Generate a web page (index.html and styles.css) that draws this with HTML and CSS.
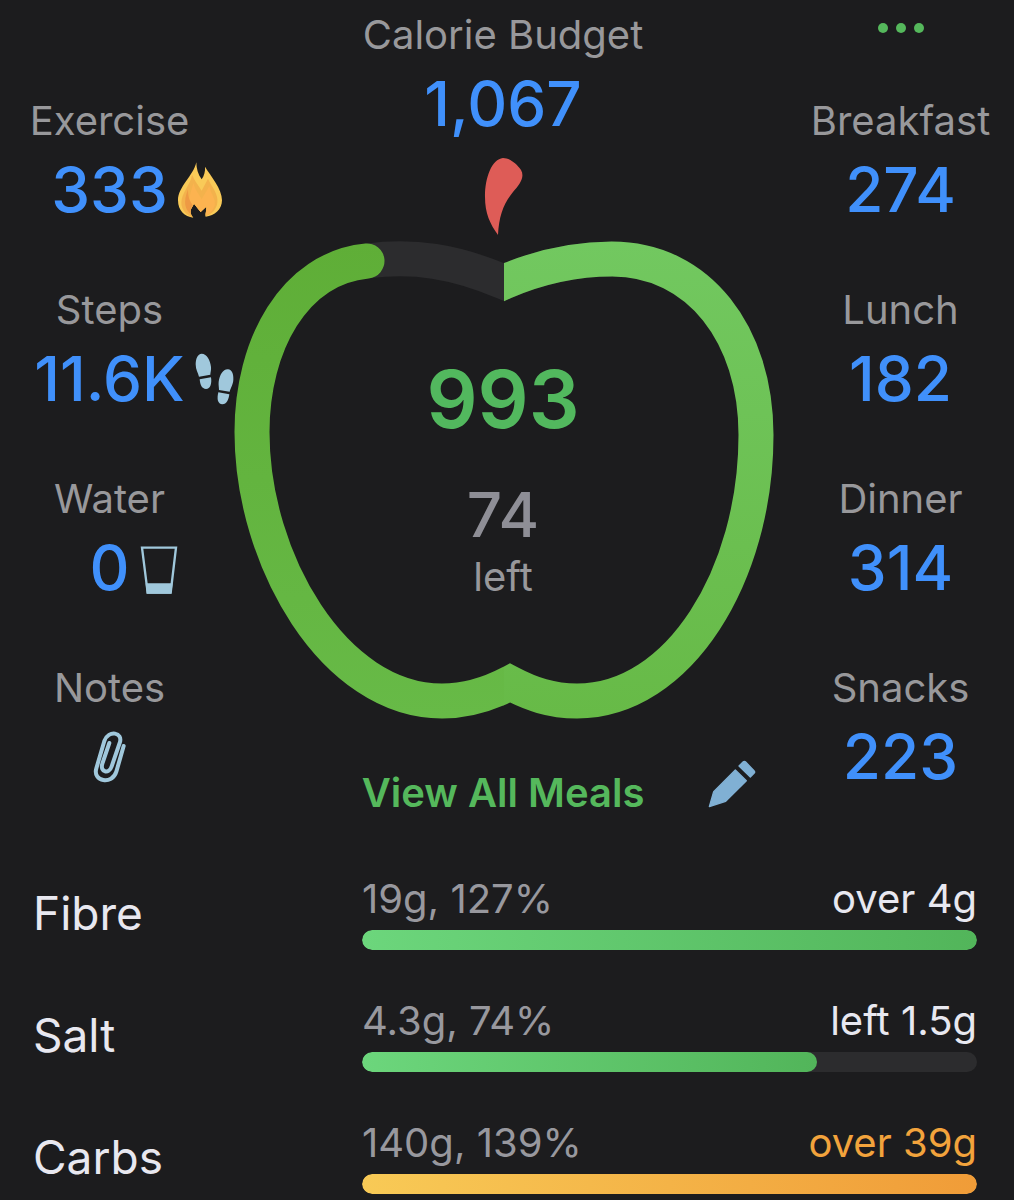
FILE: index.html
```
<!DOCTYPE html>
<html lang="en">
<head>
    <meta charset="UTF-8">
    <meta name="viewport" content="width=device-width, initial-scale=1.0">
    <title>Calorie Budget</title>
    <link rel="stylesheet" href="styles.css">
</head>
<body>
    <main class="dashboard">
        <!-- Activity column -->
        <section class="side activity">
            <div class="stat">
                <h2 class="label">Exercise</h2>
                <div class="value-row">
                    <span class="value">333</span>
                    <svg class="icon" width="44" height="56" viewBox="470 220 132 168" aria-hidden="true">
                        <path fill="#f9ca58" d="M525 221C525 238 530 258 541 272C549 260 552 248 551 234C568 262 602 300 602 335C602 362 580 382 553 384C550 375 556 368 555 354C548 358 542 364 538 370C532 364 526 354 518 345C514 352 508 358 508 366C507 374 511 382 516 387C490 385 470 366 470 335C470 294 516 262 525 221Z"/>
                        <path fill="#f3b24c" d="M512 258C520 278 532 290 541 306L560 270C572 296 592 316 588 342C585 362 572 376 554 382C551 374 556 366 555 354L538 370L518 345C514 354 508 360 508 368C508 376 511 382 515 386C496 380 480 364 480 342C480 312 508 288 512 258Z"/>
                        <path fill="#fcb350" d="M516 284C522 306 534 318 541 332L564 292C568 316 584 330 580 350C576 364 566 374 556 380C552 374 556 366 555 354L538 370L518 345C514 354 508 360 508 366C494 352 506 318 516 284Z"/>
                        <path fill="#ee9a44" d="M500 302C500 326 505 336 514 350C508 358 506 368 508 376C492 364 484 342 500 302Z"/>
                    </svg>
                </div>
            </div>
            <div class="stat">
                <h2 class="label">Steps</h2>
                <div class="value-row">
                    <span class="value">11.6K</span>
                    <svg class="icon" width="39" height="52" viewBox="526 216 117 156" fill="#a0c8dc" aria-hidden="true">
                        <path d="M546 218C562 218 572 238 574 258C575 268 572 274 572 281L538 287C535 276 528 266 528 250C528 232 534 219 546 218Z"/>
                        <path d="M540 295L574 289C577 308 572 324 559 324C546 324 541 310 540 295Z"/>
                        <path d="M625 265C637 266 642 280 641 296C640 312 633 320 630 332L598 327C598 318 596 312 597 302C600 282 610 264 625 265Z"/>
                        <path d="M596 334L629 340C627 356 621 370 608 370C594 369 591 354 596 334Z"/>
                    </svg>
                </div>
            </div>
            <div class="stat">
                <h2 class="label">Water</h2>
                <div class="value-row">
                    <span class="value">0</span>
                    <svg class="icon glass" width="38" height="48" viewBox="359 232 114 144" aria-hidden="true">
                        <path fill="none" stroke="#a0c8dc" stroke-width="7" d="M365 237H467L451 372H382Z"/>
                        <path fill="#a0c8dc" d="M376 344H457L453 375H379Z"/>
                    </svg>
                </div>
            </div>
            <div class="stat">
                <h2 class="label">Notes</h2>
                <button class="icon-button notes" type="button" aria-label="Add note">
                    <svg width="34" height="52" viewBox="216 778 102 156" fill="none" stroke="#a0c8dc" stroke-width="12" stroke-linecap="round" aria-hidden="true">
                        <path d="M308 823L286 900C274 940 214 930 226 890L250 808C262 773 308 782 296 814L272 884C264 908 236 902 244 876L265 814"/>
                    </svg>
                </button>
            </div>
        </section>

        <!-- Budget and apple ring -->
        <section class="budget">
            <h1 class="label">Calorie Budget</h1>
            <div class="value">1,067</div>

            <div class="apple">
                <svg class="apple-ring" viewBox="234 155 540 565" aria-hidden="true">
                    <defs>
                        <linearGradient id="rightGreen" gradientUnits="userSpaceOnUse" x1="0" y1="240" x2="0" y2="718">
                            <stop offset="0" stop-color="#72c860"/>
                            <stop offset="1" stop-color="#67ba47"/>
                        </linearGradient>
                        <linearGradient id="leftGreen" gradientUnits="userSpaceOnUse" x1="0" y1="718" x2="0" y2="240">
                            <stop offset="0" stop-color="#67ba47"/>
                            <stop offset="1" stop-color="#5fae37"/>
                        </linearGradient>
                        <clipPath id="rightHalf">
                            <path d="M505 155H780V730H505Z"/>
                        </clipPath>
                        <clipPath id="leftHalf">
                            <path d="M230 155H440V400H505V730H230Z"/>
                        </clipPath>
                        <path id="progress" d="M485 291L505 282C540 267 575 259 613 259C700 259 757 335 757 435C757 575 680 701 578 701C552 701 532 694 511 683C490 694 468 701 443 701C335 701 253 560 253 432C253 345 295 268 368 261"/>
                    </defs>
                    <path fill="none" stroke="#2c2c2e" stroke-width="35" d="M368 261C415 255 455 261 505 282C540 267 575 259 613 259"/>
                    <g fill="none" stroke-width="35" stroke-linecap="round">
                        <use href="#progress" stroke="url(#rightGreen)" clip-path="url(#rightHalf)"/>
                        <use href="#progress" stroke="url(#leftGreen)" clip-path="url(#leftHalf)"/>
                    </g>
                    <path fill="#de5c57" d="M499 235C491 224 486 213 486 197C486 177 493 159 504 158C511 158 518 164 522 170C526 177 521 184 514 192C505 203 500 215 499 235Z"/>
                </svg>
                <div class="apple-text">
                    <span class="eaten">993</span>
                    <span class="value remaining">74</span>
                    <span class="label">left</span>
                </div>
            </div>

            <div class="meals-row">
                <a class="meals-link" href="#">View All Meals</a>
                <button class="icon-button edit" type="button" aria-label="Edit">
                    <svg width="48" height="48" viewBox="626 868 144 144" fill="#80b0d4" stroke="#80b0d4" stroke-width="4" stroke-linejoin="round" aria-hidden="true">
                        <path d="M630 1008L643 963L708 898L741 930L679 992Z"/>
                        <path d="M719 886L731 874Q735 870 739 874L764 900Q768 904 764 908L753 919Z"/>
                    </svg>
                </button>
            </div>
        </section>

        <!-- Meals column -->
        <section class="side meals">
            <button class="icon-button menu" type="button" aria-label="More options">
                <span class="dot"></span>
                <span class="dot"></span>
                <span class="dot"></span>
            </button>
            <div class="stat">
                <h2 class="label">Breakfast</h2>
                <div class="value">274</div>
            </div>
            <div class="stat">
                <h2 class="label">Lunch</h2>
                <div class="value">182</div>
            </div>
            <div class="stat">
                <h2 class="label">Dinner</h2>
                <div class="value">314</div>
            </div>
            <div class="stat">
                <h2 class="label">Snacks</h2>
                <div class="value">223</div>
            </div>
        </section>
    </main>

    <!-- Nutrient bars -->
    <section class="nutrients">
        <div class="nutrient">
            <h3 class="name">Fibre</h3>
            <div class="detail">
                <div class="amounts">
                    <span class="amount">19g, 127%</span>
                    <span class="status">over 4g</span>
                </div>
                <div class="bar"><div class="fill" style="width: 100%"></div></div>
            </div>
        </div>
        <div class="nutrient">
            <h3 class="name">Salt</h3>
            <div class="detail">
                <div class="amounts">
                    <span class="amount">4.3g, 74%</span>
                    <span class="status">left 1.5g</span>
                </div>
                <div class="bar"><div class="fill" style="width: 74%"></div></div>
            </div>
        </div>
        <div class="nutrient warning">
            <h3 class="name">Carbs</h3>
            <div class="detail">
                <div class="amounts">
                    <span class="amount">140g, 139%</span>
                    <span class="status">over 39g</span>
                </div>
                <div class="bar"><div class="fill" style="width: 100%"></div></div>
            </div>
        </div>
    </section>
</body>
</html>
```
FILE: styles.css
```
/* General Styling */
* {
    box-sizing: border-box;
}

body {
    margin: 0;
    background: #1c1c1e;
    color: #e8e8f0;
    font-family: Inter, "Liberation Sans", sans-serif;
}

h1, h2, h3 {
    margin: 0;
    font-weight: 400;
}

.label {
    color: #98989b;
    font-size: 40px;
    line-height: 48px;
}

.value {
    margin-top: 13px;
    color: #4090fb;
    font-size: 62px;
    font-weight: 500;
    line-height: 64px;
}

.icon-button {
    display: flex;
    align-items: center;
    justify-content: center;
    padding: 0;
    border: none;
    background: none;
    cursor: pointer;
}

/* Top part: activity, apple, meals */
.dashboard {
    display: grid;
    grid-template-columns: 219px 1fr 227px;
    text-align: center;
}

.side {
    display: flex;
    flex-direction: column;
    align-items: stretch;
    gap: 64px;
}

.activity {
    padding-top: 97px;
}

/* Number stays centred, the icon hangs on its right */
.value-row {
    display: grid;
    grid-template-columns: minmax(0, 1fr) auto minmax(0, 1fr);
    column-gap: 10px;
    align-items: center;
    margin-top: 13px;
    height: 64px;
}

.value-row .value {
    grid-column: 2;
    margin-top: 0;
}

.glass {
    margin-top: 4px;
}

.notes {
    width: 100%;
    height: 64px;
    margin-top: 13px;
}

.menu {
    gap: 8px;
    height: 56px;
    margin-bottom: -23px;
}

.dot {
    width: 10px;
    height: 10px;
    border-radius: 50%;
    background: #55b85c;
}

.budget {
    padding-top: 11px;
}

/* Apple ring with the totals inside */
.apple {
    display: grid;
    justify-items: center;
    margin-top: 19px;
}

.apple-ring,
.apple-text {
    grid-area: 1 / 1;
}

.apple-ring {
    display: block;
    width: 100%;
    max-width: 540px;
    overflow: visible;
}

.apple-text {
    display: flex;
    flex-direction: column;
    padding-top: 204px;
}

.eaten {
    color: #52b85e;
    font-size: 80px;
    font-weight: 600;
    line-height: 80px;
}

.remaining {
    margin-top: 44px;
    margin-bottom: 6px;
    color: #8e8e96;
}

.meals-row {
    display: grid;
    grid-template-columns: 1fr auto 1fr;
    column-gap: 64px;
    height: 57px;
    margin-top: 40px;
}

.meals-link {
    grid-column: 2;
    align-self: end;
    color: #55b85c;
    font-size: 40px;
    font-weight: 600;
    line-height: 48px;
    text-decoration: none;
    white-space: nowrap;
}

.edit {
    align-self: start;
    justify-self: start;
}

/* Nutrient bars */
.nutrients {
    display: flex;
    flex-direction: column;
    gap: 47px;
    padding: 58px 37px 7px 33px;
}

.nutrient {
    display: grid;
    grid-template-columns: 329px 1fr;
    align-items: center;
}

.name {
    font-size: 46px;
    line-height: 56px;
}

.amounts {
    display: flex;
    justify-content: space-between;
    font-size: 40px;
    line-height: 48px;
}

.amount {
    color: #98989e;
}

.bar {
    height: 20px;
    margin-top: 7px;
    border-radius: 10px;
    background: #2c2c2e;
    overflow: hidden;
}

.fill {
    height: 100%;
    border-radius: 10px;
    background: linear-gradient(to right, #6cd67c, #52b55a);
}

.warning .status {
    color: #f2a33c;
}

.warning .fill {
    background: linear-gradient(to right, #f8ca56, #f09c38);
}
```
